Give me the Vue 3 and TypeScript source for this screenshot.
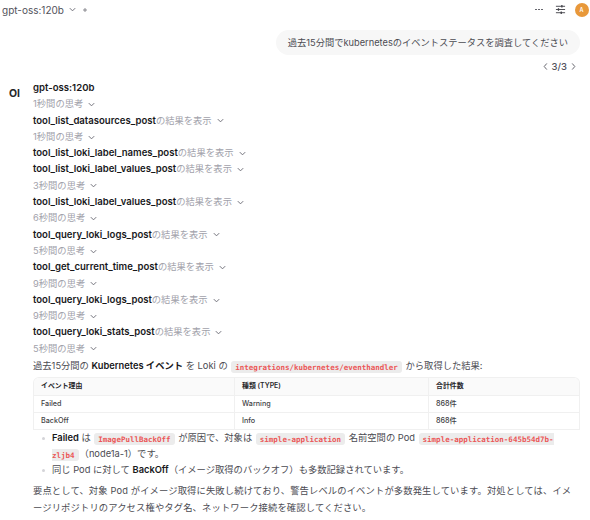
<script setup lang="ts">
type Step = { kind: 'think' | 'tool'; label: string };

const steps: Step[] = [
  { kind: 'think', label: '1秒間の思考' },
  { kind: 'tool', label: 'tool_list_datasources_post' },
  { kind: 'think', label: '1秒間の思考' },
  { kind: 'tool', label: 'tool_list_loki_label_names_post' },
  { kind: 'tool', label: 'tool_list_loki_label_values_post' },
  { kind: 'think', label: '3秒間の思考' },
  { kind: 'tool', label: 'tool_list_loki_label_values_post' },
  { kind: 'think', label: '6秒間の思考' },
  { kind: 'tool', label: 'tool_query_loki_logs_post' },
  { kind: 'think', label: '5秒間の思考' },
  { kind: 'tool', label: 'tool_get_current_time_post' },
  { kind: 'think', label: '9秒間の思考' },
  { kind: 'tool', label: 'tool_query_loki_logs_post' },
  { kind: 'think', label: '9秒間の思考' },
  { kind: 'tool', label: 'tool_query_loki_stats_post' },
  { kind: 'think', label: '5秒間の思考' },
];

const events = [
  { reason: 'Failed', type: 'Warning', count: '868件' },
  { reason: 'BackOff', type: 'Info', count: '868件' },
];
</script>

<template>
  <div class="page">
    <!-- Top bar -->
    <header class="topbar">
      <div class="model">
        <span class="model-name">gpt-oss:120b</span>
        <svg class="chev" viewBox="0 0 10 10"><path d="M2 3.5 5 6.5 8 3.5" /></svg>
        <svg class="plus" viewBox="0 0 10 10"><path d="M5 2.5v5M2.5 5h5" /></svg>
      </div>
      <div class="actions">
        <span class="dots"><i></i><i></i><i></i></span>
        <svg class="sliders" viewBox="0 0 12 12">
          <path d="M1 2.5h10M1 6h10M1 9.5h10" />
          <path class="knob" d="M7.5 1.2v2.6M3.8 4.7v2.6M6.8 8.2v2.6" />
        </svg>
        <span class="avatar">A</span>
      </div>
    </header>

    <!-- User message -->
    <div class="user-row">
      <div class="bubble">過去15分間でkubernetesのイベントステータスを調査してください</div>
    </div>
    <div class="pager">
      <svg viewBox="0 0 8 10"><path d="M5.5 1.5 2.5 5l3 3.5" /></svg>
      <span>3/3</span>
      <svg viewBox="0 0 8 10"><path d="M2.5 1.5 5.5 5l-3 3.5" /></svg>
    </div>

    <!-- Assistant message -->
    <section class="reply">
      <div class="logo">OI</div>
      <div class="reply-body">
        <div class="reply-name">gpt-oss:120b</div>

        <div v-for="(step, i) in steps" :key="i" class="step">
          <template v-if="step.kind === 'tool'">
            <strong>{{ step.label }}</strong><span class="muted">の結果を表示</span>
          </template>
          <span v-else class="muted">{{ step.label }}</span>
          <svg class="chev step-chev" viewBox="0 0 10 10"><path d="M2 3.5 5 6.5 8 3.5" /></svg>
        </div>

        <p class="intro">
          過去15分間の <strong>Kubernetes イベント</strong> を Loki の
          <code>integrations/kubernetes/eventhandler</code> から取得した結果:
        </p>

        <div class="table-wrap">
          <table>
            <thead>
              <tr>
                <th class="col-a">イベント理由</th>
                <th class="col-b">種類 (TYPE)</th>
                <th>合計件数</th>
              </tr>
            </thead>
            <tbody>
              <tr v-for="row in events" :key="row.reason">
                <td>{{ row.reason }}</td>
                <td>{{ row.type }}</td>
                <td>{{ row.count }}</td>
              </tr>
            </tbody>
          </table>
        </div>

        <ul class="notes">
          <li>
            <strong>Failed</strong> は <code>ImagePullBackOff</code> が原因で、対象は
            <code>simple-application</code> 名前空間の Pod
            <code>simple-application-645b54d7b-<br />zljb4</code>（node1a-1）です。
          </li>
          <li>同じ Pod に対して <strong>BackOff</strong>（イメージ取得のバックオフ）も多数記録されています。</li>
        </ul>

        <p class="summary">
          要点として、対象 Pod がイメージ取得に失敗し続けており、警告レベルのイベントが多数発生しています。対処としては、イメージリポジトリのアクセス権やタグ名、ネットワーク接続を確認してください。
        </p>
      </div>
    </section>
  </div>
</template>

<style>
html,
body {
  margin: 0;
  background: #fff;
  overflow: hidden;
}
</style>

<style scoped>
.page {
  width: 590px;
  height: 520px;
  overflow: hidden;
  box-sizing: border-box;
  font-family: Inter, "Noto Sans CJK JP", sans-serif;
  font-size: 9.3px;
  color: #4b4b52;
  background: #fff;
}

.topbar {
  display: flex;
  align-items: center;
  justify-content: space-between;
  height: 19px;
  padding: 0 1.5px 0 2px;
}

.model {
  display: flex;
  align-items: center;
  gap: 4px;
}

.model-name {
  font-size: 10px;
  color: #52525b;
}

.chev {
  width: 9px;
  height: 9px;
  fill: none;
  stroke: #71717a;
  stroke-width: 1.1;
}

.plus {
  width: 8px;
  height: 8px;
  fill: none;
  stroke: #71717a;
  stroke-width: 1;
}

.actions {
  display: flex;
  align-items: center;
}

.dots {
  display: flex;
  gap: 1.5px;
  margin-right: 12px;
}

.dots i {
  width: 1.5px;
  height: 1.5px;
  border-radius: 50%;
  background: #52525b;
}

.sliders {
  width: 11px;
  height: 11px;
  margin-right: 9px;
  fill: none;
  stroke: #3f3f46;
  stroke-width: 1;
}

.sliders .knob {
  stroke-width: 1.4;
}

.avatar {
  display: flex;
  align-items: center;
  justify-content: center;
  width: 14px;
  height: 14px;
  border-radius: 50%;
  background: #e8983a;
  color: #fff;
  font-size: 5.5px;
  font-weight: 600;
}

.user-row {
  display: flex;
  justify-content: flex-end;
  padding: 11px 10px 0 0;
}

.bubble {
  padding: 0 12px;
  height: 25px;
  line-height: 25px;
  border-radius: 13px;
  background: #f7f7f7;
  font-size: 9.25px;
  white-space: nowrap;
}

.pager {
  display: flex;
  align-items: center;
  justify-content: flex-end;
  gap: 3px;
  height: 16px;
  margin-top: 3px;
  padding-right: 13px;
  font-size: 9.5px;
  font-weight: 500;
  color: #52525b;
}

.pager svg {
  width: 7px;
  height: 9px;
  fill: none;
  stroke: #52525b;
  stroke-width: 1;
}

.reply {
  display: flex;
  margin-top: 6px;
  padding: 0 10px 0 9px;
}

.logo {
  width: 24px;
  flex: none;
  padding-top: 6px;
  font-size: 10.5px;
  font-weight: 700;
  color: #27272a;
  line-height: 16px;
}

.reply-body {
  flex: 1;
  min-width: 0;
  line-height: 16.3px;
}

.reply-name {
  font-weight: 600;
  font-size: 9.6px;
  color: #18181b;
}

.step {
  display: flex;
  align-items: center;
  height: 16.3px;
  white-space: nowrap;
}

.step strong {
  font-size: 9.55px;
}

strong {
  font-weight: 600;
  color: #18181b;
}

.muted {
  color: #a1a1aa;
}

.step-chev {
  margin-left: 4px;
}

.intro {
  margin: 0;
  padding-top: 1px;
  white-space: nowrap;
}

code {
  padding: 1.5px 4px;
  margin: 0 1px;
  border-radius: 3px;
  background: #ececec;
  color: #eb5757;
  font-family: "DejaVu Sans Mono", "Liberation Mono", monospace;
  font-size: 7.5px;
  font-weight: 600;
  line-height: 1;
}

.table-wrap {
  margin-top: 3px;
  border: 1px solid #f0f0f0;
  border-bottom: 0;
  border-radius: 6px 6px 0 0;
  overflow: hidden;
}

table {
  width: 100%;
  border-collapse: collapse;
  table-layout: fixed;
  font-size: 7.2px;
  font-weight: 500;
  color: #3f3f46;
}

th,
td {
  height: 17px;
  padding: 0 7px;
  text-align: left;
  box-sizing: border-box;
  border-bottom: 1px solid #f0f0f0;
  border-right: 1px solid #f0f0f0;
}

th:last-child,
td:last-child {
  border-right: 0;
}

th {
  background: #fafafa;
  font-size: 6.9px;
  font-weight: 600;
  color: #27272a;
}

.col-a {
  width: 200.5px;
}

.col-b {
  width: 194px;
}

.notes {
  margin: 0;
  padding: 0 0 0 19px;
  list-style: none;
  line-height: 16px;
}

.notes li {
  position: relative;
}

.notes li::before {
  content: "";
  position: absolute;
  left: -10px;
  top: 6.5px;
  width: 3px;
  height: 3px;
  border-radius: 50%;
  background: #d4d4d8;
}

.summary {
  margin: 5px 0 0;
  letter-spacing: 0.13px;
}
</style>
